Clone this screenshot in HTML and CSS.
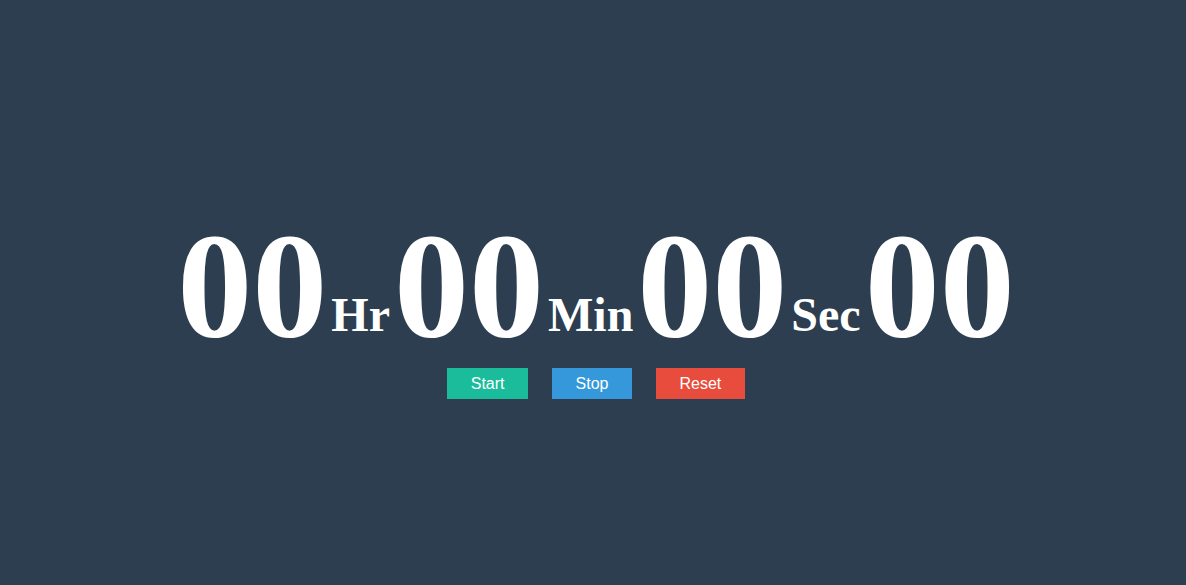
FILE: index.html
```html
<!DOCTYPE html>
<html lang="en">
<head>
<meta charset="utf-8">
<title>Stopwatch</title>
<link rel="stylesheet" href="styles.css">
</head>
<body>
<main class="stopwatch">
  <div class="clock"><span class="digits">00</span> <span class="unit">Hr</span> <span class="digits">00</span> <span class="unit">Min</span> <span class="digits">00</span> <span class="unit">Sec</span> <span class="digits">00</span></div>
  <div class="controls">
    <button class="btn btn-start" type="button">Start</button>
    <button class="btn btn-stop" type="button">Stop</button>
    <button class="btn btn-reset" type="button">Reset</button>
  </div>
</main>
</body>
</html>
```
FILE: styles.css
```css
html, body {
  margin: 0;
  padding: 0;
  height: 100%;
  background: #2c3e50;
}

.stopwatch {
  padding: 211px 0 0 6px;
  text-align: center;
}

.clock {
  font-family: "Liberation Serif", "Times New Roman", serif;
  font-weight: bold;
  font-size: 16px;
  line-height: 1;
  color: #ffffff;
  white-space: nowrap;
}

.digits {
  font-size: 150px;
}

.unit {
  font-size: 48px;
  vertical-align: 6px;
}

.controls {
  display: flex;
  justify-content: center;
  gap: 24px;
  margin-top: 7px;
}

.btn {
  border: 0;
  margin: 0;
  height: 31px;
  padding: 0 23.5px;
  font-family: "Liberation Sans", Arial, sans-serif;
  font-size: 16px;
  line-height: 31px;
  color: #ffffff;
  cursor: pointer;
}

.btn-start { background: #1abc9c; }
.btn-stop { background: #3498db; }
.btn-reset { background: #e74c3c; }
```
